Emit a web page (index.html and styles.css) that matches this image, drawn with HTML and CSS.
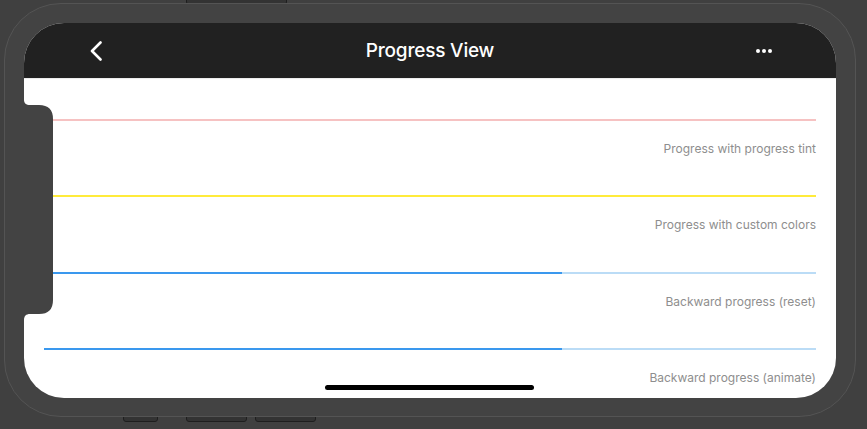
FILE: index.html
```html
<!DOCTYPE html>
<html>
<head>
<meta charset="utf-8">
<link rel="stylesheet" href="styles.css">
</head>
<body>
<div class="stage">
  <div class="hw-btn hw-top"></div>
  <div class="hw-btn hw-b1"></div>
  <div class="hw-btn hw-b2"></div>
  <div class="hw-btn hw-b3"></div>
  <div class="device">
    <div class="screen">
      <header class="navbar">
        <div class="nav-btn">
          <svg width="14" height="20" viewBox="0 0 14 20"><path d="M11.5 1.5 L3 10 L11.5 18.5" fill="none" stroke="#fff" stroke-width="2.6" stroke-linecap="round" stroke-linejoin="round"/></svg>
        </div>
        <h1 class="title">Progress View</h1>
        <div class="nav-btn">
          <svg width="16" height="4" viewBox="0 0 16 4"><circle cx="2" cy="2" r="2" fill="#fff"/><circle cx="8" cy="2" r="2" fill="#fff"/><circle cx="14" cy="2" r="2" fill="#fff"/></svg>
        </div>
      </header>
      <main class="content">
        <section class="item">
          <div class="track track-pink"><div class="bar bar-pink" style="width:100%"></div></div>
          <p class="label">Progress with progress tint</p>
        </section>
        <section class="item">
          <div class="track track-yellow"><div class="bar bar-yellow" style="width:100%"></div></div>
          <p class="label">Progress with custom colors</p>
        </section>
        <section class="item">
          <div class="track track-blue"><div class="bar bar-blue" style="width:67.1%"></div></div>
          <p class="label">Backward progress (reset)</p>
        </section>
        <section class="item">
          <div class="track track-blue"><div class="bar bar-blue" style="width:67.1%"></div></div>
          <p class="label">Backward progress (animate)</p>
        </section>
      </main>
      <svg class="notch" width="30" height="220" viewBox="0 0 30 220"><path d="M0 0 C0 3 2 5 6 5 L15 5 Q29 5 29 19 L29 200 Q29 214 15 214 L6 214 C2 214 0 216 0 220 Z" fill="#434343"/></svg>
      <div class="home-indicator"></div>
    </div>
  </div>
</div>
</body>
</html>
```
FILE: styles.css
```css
* { box-sizing: border-box; }
html, body { margin: 0; padding: 0; }
body {
  width: 867px;
  height: 429px;
  overflow: hidden;
  background: #404040;
  font-family: Inter, "Liberation Sans", sans-serif;
}
.stage {
  position: relative;
  width: 867px;
  height: 429px;
  padding: 3px 0 0 4px;
}
.hw-btn {
  position: absolute;
  background: #333;
  border: 1px solid #1e1e1e;
  border-radius: 0 0 3px 3px;
}
.hw-top { left: 186px; top: -1px; width: 101px; height: 6px; }
.hw-b1 { left: 123px; top: 410px; width: 35px; height: 12px; }
.hw-b2 { left: 186px; top: 410px; width: 61px; height: 12px; }
.hw-b3 { left: 255px; top: 410px; width: 61px; height: 12px; }
.device {
  position: relative;
  width: 852px;
  height: 414px;
  padding: 19px;
  border-radius: 57px;
  border: 1px solid #545454;
  background: #434343;
}
.screen {
  position: relative;
  width: 812px;
  height: 375px;
  border-radius: 40px;
  overflow: hidden;
  background: #fff;
}
.navbar {
  height: 56px;
  background: #212121;
  display: flex;
  align-items: center;
  justify-content: space-between;
  padding: 0 44px;
  border-bottom: 1px solid #ececec;
}
.nav-btn {
  width: 56px;
  height: 55px;
  display: flex;
  align-items: center;
  justify-content: center;
}
.title {
  margin: 0;
  color: #fff;
  font-size: 19px;
  font-weight: 500;
  letter-spacing: -0.2px;
}
.content {
  padding: 40px 20px 0;
}
.item {
  height: 76.4px;
}
.track {
  height: 2px;
  width: 100%;
}
.bar { height: 2px; }
.track-pink { background: #f7c5c5; }
.bar-pink { background: #f6c2c2; }
.track-yellow { background: #ffeb3b; }
.bar-yellow { background: #ffeb3b; }
.track-blue { background: #bbdcf6; }
.bar-blue { background: #3a98ee; }
.label {
  margin: 20px 0 0;
  text-align: right;
  font-size: 12px;
  line-height: 16px;
  color: #8e8e8e;
}
.notch {
  position: absolute;
  left: 0;
  top: 77px;
  display: block;
}
.home-indicator {
  position: absolute;
  left: 301px;
  bottom: 8px;
  width: 209px;
  height: 5px;
  border-radius: 3px;
  background: #000;
}
```
